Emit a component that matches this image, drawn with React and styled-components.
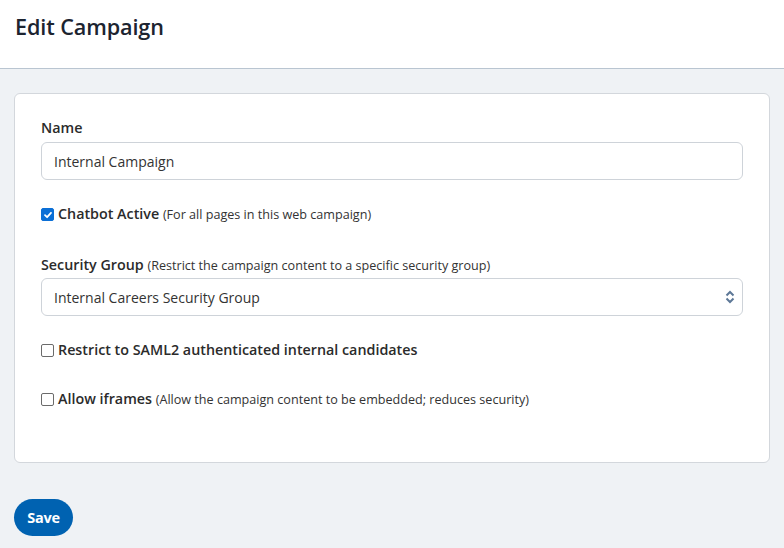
import React from "react";
import styled, { createGlobalStyle } from "styled-components";

const Global = createGlobalStyle`
  html, body { margin: 0; padding: 0; }
  body { background: #eff2f5; font-family: "Open Sans", "Noto Sans", sans-serif; color: #333; }
  * { box-sizing: border-box; }
`;

const Page = styled.div`
  min-height: 548px;
  display: flex;
  flex-direction: column;
`;

const Header = styled.header`
  background: #fff;
  height: 69px;
  border-bottom: 1px solid #b9c5d1;
  padding: 12px 15px 0;
`;

const Title = styled.h1`
  margin: 0;
  font-family: "Open Sans", sans-serif;
  font-size: 21.6px;
  font-weight: 600;
  color: #1c2430;
  letter-spacing: -0.1px;
`;

const Main = styled.main`
  padding: 24px 14px 0;
`;

const Card = styled.section`
  background: #fff;
  border: 1px solid #d3d7dc;
  border-radius: 6px;
  padding: 24px 26px 52px;
  display: flex;
  flex-direction: column;
`;

const Field = styled.div`
  display: flex;
  flex-direction: column;
  margin-bottom: ${(p) => p.$mb || 0}px;
`;

const Label = styled.label`
  font-size: 14.3px;
  font-weight: 600;
  color: #2b2b2b;
  line-height: 20px;
  margin-bottom: ${(p) => (p.$mb != null ? p.$mb : 4)}px;
`;

const Hint = styled.span`
  font-size: 12.6px;
  font-weight: 400;
  color: #333;
`;

const Input = styled.div`
  height: 38px;
  border: 1px solid #ced3d9;
  border-radius: 6px;
  padding: 0 12px;
  display: flex;
  align-items: center;
  font-size: 14px;
  color: #333;
`;

const Select = styled(Input)`
  justify-content: space-between;
  padding-right: 7px;
`;

const CheckRow = styled.div`
  display: flex;
  align-items: center;
  gap: 4px;
  line-height: 20px;
  margin-bottom: ${(p) => p.$mb || 0}px;
`;

const Box = styled.span`
  width: 13px;
  height: 13px;
  border-radius: 2px;
  flex: none;
  display: inline-flex;
  align-items: center;
  justify-content: center;
  background: ${(p) => (p.$checked ? "#0b6fd6" : "#fff")};
  border: 1px solid ${(p) => (p.$checked ? "#0b6fd6" : "#6b6b6b")};
`;

const CheckLabel = styled.span`
  font-size: 14.3px;
  font-weight: 600;
  color: #2b2b2b;
`;

const Footer = styled.div`
  padding: 36px 14px 0;
`;

const SaveButton = styled.button`
  height: 37px;
  width: 59px;
  border: none;
  border-radius: 19px;
  background: #0062b1;
  color: #fff;
  font-family: "Open Sans", sans-serif;
  font-size: 14.5px;
  font-weight: 700;
  letter-spacing: -0.3px;
  padding: 0;
`;

const Check = ({ checked }) => (
  <Box $checked={checked}>
    {checked && (
      <svg width="10" height="10" viewBox="0 0 10 10">
        <path d="M2 5.2 L4.1 7.2 L8 2.8" stroke="#fff" strokeWidth="1.8" fill="none" strokeLinecap="round" strokeLinejoin="round" />
      </svg>
    )}
  </Box>
);

const Chevrons = () => (
  <svg width="10" height="14" viewBox="0 0 10 14">
    <path d="M1.5 5.5 L5 2 L8.5 5.5" stroke="#5d7897" strokeWidth="2" fill="none" />
    <path d="M1.5 8.5 L5 12 L8.5 8.5" stroke="#5d7897" strokeWidth="2" fill="none" />
  </svg>
);

export default function App() {
  return (
    <Page>
      <Global />
      <Header>
        <Title>Edit Campaign</Title>
      </Header>
      <Main>
        <Card>
          <Field $mb={24}>
            <Label>Name</Label>
            <Input>Internal Campaign</Input>
          </Field>
          <CheckRow $mb={30}>
            <Check checked />
            <CheckLabel>Chatbot Active <Hint>(For all pages in this web campaign)</Hint></CheckLabel>
          </CheckRow>
          <Field $mb={24}>
            <Label $mb={2}>Security Group <Hint>(Restrict the campaign content to a specific security group)</Hint></Label>
            <Select>
              <span>Internal Careers Security Group</span>
              <Chevrons />
            </Select>
          </Field>
          <CheckRow $mb={29}>
            <Check />
            <CheckLabel>Restrict to SAML2 authenticated internal candidates</CheckLabel>
          </CheckRow>
          <CheckRow>
            <Check />
            <CheckLabel>Allow iframes <Hint>(Allow the campaign content to be embedded; reduces security)</Hint></CheckLabel>
          </CheckRow>
        </Card>
      </Main>
      <Footer>
        <SaveButton>Save</SaveButton>
      </Footer>
    </Page>
  );
}
